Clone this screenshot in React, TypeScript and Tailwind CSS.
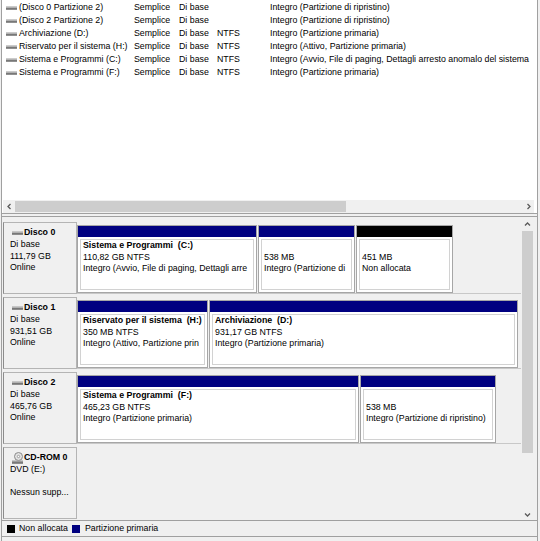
import React from "react";

// Volume list (top pane)
const volumes = [
  { name: "(Disco 0 Partizione 2)", fs: "", status: "Integro (Partizione di ripristino)" },
  { name: "(Disco 2 Partizione 2)", fs: "", status: "Integro (Partizione di ripristino)" },
  { name: "Archiviazione (D:)", fs: "NTFS", status: "Integro (Partizione primaria)" },
  { name: "Riservato per il sistema (H:)", fs: "NTFS", status: "Integro (Attivo, Partizione primaria)" },
  {
    name: "Sistema e Programmi (C:)",
    fs: "NTFS",
    status: "Integro (Avvio, File di paging, Dettagli arresto anomalo del sistema",
  },
  { name: "Sistema e Programmi (F:)", fs: "NTFS", status: "Integro (Partizione primaria)" },
];

interface Part {
  width: string;
  bar: string;
  name?: string;
  size: string;
  status: string;
}

interface Disk {
  title: string;
  cd?: boolean;
  lines: string[];
  parts: Part[];
}

const disks: Disk[] = [
  {
    title: "Disco 0",
    lines: ["Di base", "111,79 GB", "Online"],
    parts: [
      {
        width: "w-[180px]",
        bar: "bg-[#000080]",
        name: "Sistema e Programmi  (C:)",
        size: "110,82 GB NTFS",
        status: "Integro (Avvio, File di paging, Dettagli arre",
      },
      { width: "w-[97px]", bar: "bg-[#000080]", size: "538 MB", status: "Integro (Partizione di" },
      { width: "w-[97px]", bar: "bg-black", size: "451 MB", status: "Non allocata" },
    ],
  },
  {
    title: "Disco 1",
    lines: ["Di base", "931,51 GB", "Online"],
    parts: [
      {
        width: "w-[131px]",
        bar: "bg-[#000080]",
        name: "Riservato per il sistema  (H:)",
        size: "350 MB NTFS",
        status: "Integro (Attivo, Partizione prin",
      },
      {
        width: "w-[309px]",
        bar: "bg-[#000080]",
        name: "Archiviazione  (D:)",
        size: "931,17 GB NTFS",
        status: "Integro (Partizione primaria)",
      },
    ],
  },
  {
    title: "Disco 2",
    lines: ["Di base", "465,76 GB", "Online"],
    parts: [
      {
        width: "w-[282px]",
        bar: "bg-[#000080]",
        name: "Sistema e Programmi  (F:)",
        size: "465,23 GB NTFS",
        status: "Integro (Partizione primaria)",
      },
      { width: "w-[136px]", bar: "bg-[#000080]", size: "538 MB", status: "Integro (Partizione di ripristino)" },
    ],
  },
  {
    title: "CD-ROM 0",
    cd: true,
    lines: ["DVD (E:)", "", "Nessun supp..."],
    parts: [],
  },
];

const DriveIcon = () => (
  <svg width="11" height="6" viewBox="0 0 11 6" className="shrink-0">
    <rect x="0" y="1.5" width="11" height="3" fill="#9c9c9c" />
    <line x1="0" y1="4" x2="11" y2="4" stroke="#555555" strokeWidth="1" />
    <line x1="0" y1="2" x2="11" y2="2" stroke="#c8c8c8" strokeWidth="1" />
  </svg>
);

const CdIcon = () => (
  <svg width="11" height="12" viewBox="0 0 11 12" className="shrink-0">
    <circle cx="6.5" cy="4.5" r="4" fill="#e2e2e2" stroke="#8a8a8a" strokeWidth="1" />
    <circle cx="6.5" cy="4.5" r="1.2" fill="#ffffff" stroke="#8a8a8a" strokeWidth="0.8" />
    <rect x="0" y="8.5" width="11" height="3" fill="#9c9c9c" />
    <line x1="0" y1="11" x2="11" y2="11" stroke="#555555" strokeWidth="1" />
  </svg>
);

const Chevron = ({ dir }: { dir: "left" | "right" | "up" | "down" }) => {
  const d = {
    left: "M4.5 1 L2 3.5 L4.5 6",
    right: "M2.5 1 L5 3.5 L2.5 6",
    up: "M1 4.5 L3.5 2 L6 4.5",
    down: "M1 2.5 L3.5 5 L6 2.5",
  }[dir];
  return (
    <svg width="7" height="7" viewBox="0 0 7 7">
      <path d={d} fill="none" stroke="#5a5a5a" strokeWidth="1.3" />
    </svg>
  );
};

const Partition = ({ part }: { part: Part }) => (
  <div className={`${part.width} h-[68px] shrink-0 border border-[#a6a6a6] bg-white flex flex-col`}>
    <div className={`h-[11px] ${part.bar}`} />
    <div className="flex-1 min-h-0 p-[2px]">
      <div className="h-full border border-[#d2d2d2] px-[2px] leading-[11.5px] overflow-hidden whitespace-pre">
        <div className="font-bold">{part.name ?? " "}</div>
        <div>{part.size}</div>
        <div>{part.status}</div>
      </div>
    </div>
  </div>
);

const DiskRow = ({ disk }: { disk: Disk }) => (
  <div className="h-[72px] flex">
    <div className="w-[74px] h-full shrink-0 border border-[#b4b4b4] border-l-[#8c8c8c] bg-[#f0f0f0] pl-[6px] pt-[3px] leading-[11.5px] whitespace-pre">
      <div className="h-[13px] flex items-center">
        <span className="ml-[2px] flex">{disk.cd ? <CdIcon /> : <DriveIcon />}</span>
        <span className="ml-[1px] font-bold">{disk.title}</span>
      </div>
      {disk.lines.map((l, i) => (
        <div key={i} className="h-[11.5px]">
          {l}
        </div>
      ))}
    </div>
    <div
      className={`flex-1 flex gap-[1px] pt-[3px] items-start ${
        disk.cd ? "" : "border-b border-[#c8c8c8]"
      }`}
    >
      {disk.parts.map((p, i) => (
        <Partition key={i} part={p} />
      ))}
    </div>
  </div>
);

export default function App() {
  return (
    <div className="w-[540px] h-[541px] bg-[#f0f0f0] text-black font-['Liberation_Sans',Arial,sans-serif] text-[8.8px] overflow-hidden">
      <div className="ml-[1px] w-[537px] h-full border-x border-[#a0a0a0] flex flex-col">
        {/* Volume list */}
        <div className="h-[214px] bg-white border-b border-[#a0a0a0] flex flex-col overflow-hidden">
          <div className="flex-1 pt-[1px] pl-[4px]">
            {volumes.map((v) => (
              <div key={v.name} className="h-[13px] flex items-center whitespace-nowrap">
                <span className="w-[11px] mr-[2px] flex">
                  <DriveIcon />
                </span>
                <span className="w-[115px] shrink-0">{v.name}</span>
                <span className="w-[45px] shrink-0">Semplice</span>
                <span className="w-[38px] shrink-0">Di base</span>
                <span className="w-[53px] shrink-0">{v.fs}</span>
                <span className="w-[263px] shrink-0 overflow-hidden">{v.status}</span>
              </div>
            ))}
          </div>
          {/* horizontal scrollbar */}
          <div className="h-[13px] ml-[1px] w-[531px] flex items-center bg-[#f0f0f0]">
            <div className="w-[12px] h-full flex items-center justify-center">
              <Chevron dir="left" />
            </div>
            <div className="flex-1 h-full flex items-center">
              <div className="w-[331px] h-[11px] bg-[#cdcdcd]" />
            </div>
            <div className="w-[12px] h-full flex items-center justify-center">
              <Chevron dir="right" />
            </div>
          </div>
        </div>

        <div className="h-[2px]" />

        {/* Disk map */}
        <div className="h-[304px] border-t border-[#a0a0a0] flex">
          <div className="w-[519px] pl-[1px] pt-[5px] flex flex-col gap-[3px]">
            {disks.map((d) => (
              <DiskRow key={d.title} disk={d} />
            ))}
          </div>
          {/* vertical scrollbar */}
          <div className="w-[13px] h-full flex flex-col">
            <div className="h-[14px] flex items-center justify-center">
              <Chevron dir="up" />
            </div>
            <div className="h-[222px] mx-[1px] bg-[#cdcdcd]" />
            <div className="flex-1" />
            <div className="h-[12px] flex items-center justify-center">
              <Chevron dir="down" />
            </div>
          </div>
        </div>

        {/* Legend */}
        <div className="h-[17px] border-y border-[#a0a0a0] flex items-center pl-[5px]">
          <span className="w-[8px] h-[8px] bg-black" />
          <span className="ml-[4px]">Non allocata</span>
          <span className="ml-[4px] w-[8px] h-[8px] bg-[#000080]" />
          <span className="ml-[5px]">Partizione primaria</span>
        </div>
      </div>
    </div>
  );
}
